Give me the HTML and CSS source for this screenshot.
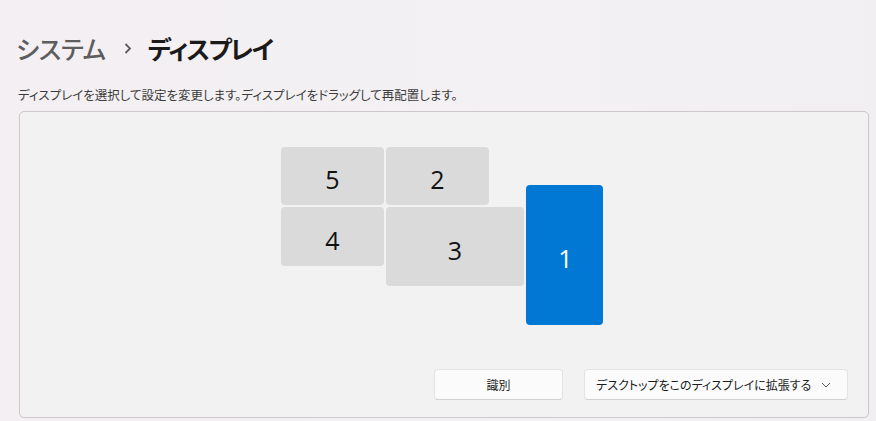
FILE: index.html
```html
<!DOCTYPE html>
<html lang="ja">
<head>
<meta charset="utf-8">
<title>ディスプレイ</title>
<link rel="stylesheet" href="styles.css">
</head>
<body>
<header class="title">
  <span class="crumb">システム</span>
  <svg class="sep" width="8" height="11" viewBox="0 0 8 11"><path d="M1.5 1 L6 5.5 L1.5 10" fill="none" stroke="#5d5d5d" stroke-width="1.8"/></svg>
  <span class="current">ディスプレイ</span>
</header>
<p class="desc">ディスプレイを選択して設定を変更します。ディスプレイをドラッグして再配置します。</p>
<section class="card">
  <div class="canvas">
    <div class="mon m5">5</div>
    <div class="mon m2">2</div>
    <div class="mon m4">4</div>
    <div class="mon m3">3</div>
    <div class="mon m1 active">1</div>
  </div>
  <div class="actions">
    <button class="btn identify">識別</button>
    <button class="btn dropdown"><span>デスクトップをこのディスプレイに拡張する</span>
      <svg class="chev" width="10" height="6" viewBox="0 0 10 6"><path d="M1 1 L5 5 L9 1" fill="none" stroke="#5a5a5a" stroke-width="1"/></svg>
    </button>
  </div>
</section>
</body>
</html>
```
FILE: styles.css
```css
* { box-sizing: border-box; }
html, body { margin: 0; padding: 0; }
body {
  width: 876px;
  height: 421px;
  overflow: hidden;
  background: linear-gradient(90deg, #f3eff2 0%, #f3f1f3 60%, #f2eff2 100%);
  font-family: "Noto Sans CJK JP", "Noto Sans", sans-serif;
  color: #1b1b1b;
}
.title {
  display: flex;
  align-items: center;
  padding: 22px 0 0 16px;
  height: 74px;
  font-size: 25px;
  line-height: 40px;
  font-feature-settings: "palt";
}
.crumb { color: #5d5d5d; font-weight: 500; letter-spacing: -0.3px; }
.sep { margin: 1px 16px 0 18px; }
.current { color: #1a1a1a; font-weight: 700; letter-spacing: -1.6px; }
.desc {
  margin: 13px 0 0 18px;
  font-size: 12.5px;
  line-height: 16px;
  color: #3c3c3c;
  height: 16px;
  font-feature-settings: "palt";
}
.card {
  margin: 8px 0 0 19px;
  width: 850px;
  height: 307px;
  border: 1px solid #cbc7ca;
  border-radius: 5px;
  background: #f2f2f2;
  display: flex;
  flex-direction: column;
}
.canvas {
  position: relative;
  height: 257px;
}
.mon {
  position: absolute;
  background: #dadada;
  border-radius: 4px;
  display: flex;
  align-items: center;
  justify-content: center;
  font-family: "Open Sans", "Noto Sans", sans-serif;
  font-size: 25px;
  color: #111;
  padding-top: 6px;
}
.m5 { left: 261px; top: 35px; width: 103px; height: 58px; }
.m2 { left: 366px; top: 35px; width: 103px; height: 58px; }
.m4 { left: 261px; top: 95px; width: 103px; height: 59px; }
.m3 { left: 366px; top: 95px; width: 138px; height: 79px; }
.m1 { left: 506px; top: 73px; width: 77px; height: 140px; padding-left: 2px; }
.active { background: #0078d4; color: #fff; }
.actions {
  display: flex;
  justify-content: flex-end;
  gap: 21px;
  padding-right: 20px;
}
.btn {
  height: 31px;
  border: 1px solid #e3e3e3;
  border-bottom-color: #d0d0d0;
  border-radius: 4px;
  background: #fbfbfb;
  font-family: "Noto Sans CJK JP", sans-serif;
  font-feature-settings: "palt";
  font-size: 12px;
  color: #1b1b1b;
  padding: 0;
}
.identify { width: 129px; margin-left: -2px; }
.dropdown {
  width: 264px;
  display: flex;
  align-items: center;
  justify-content: space-between;
  padding: 0 16px 0 11px;
}
.chev { margin-top: 1px; }
```
